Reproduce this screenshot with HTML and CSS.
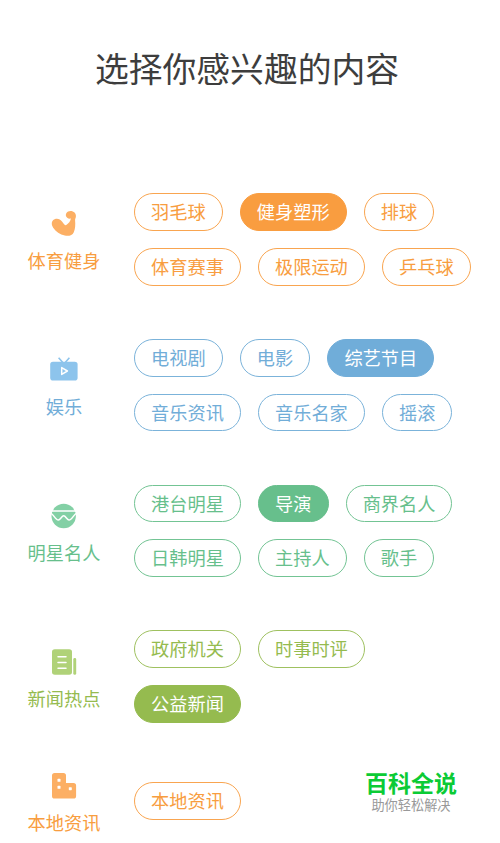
FILE: index.html
```html
<!DOCTYPE html>
<html lang="zh-CN">
<head>
  <meta charset="UTF-8" />
  <title>选择你感兴趣的内容</title>
  <link rel="stylesheet" href="styles.css">
</head>
<body>
  <h1>选择你感兴趣的内容</h1>

  <div class="sections">
    <div class="section orange">
      <div class="category">
        <svg class="icon" viewBox="0 0 28 28">
          <path d="M17.2 7.8C15.8 6.6 15.4 4.8 16.3 3.2C17.5 1.1 20.5 .5 22.8 1.5C25 2.3 26.2 4.5 25.9 6.7C25.7 8 25 8.6 25.1 10.5C25.5 14.5 25.3 19 23.8 22.2C22.4 25.4 18.8 26.4 14.8 25.6C10 24.6 5.8 21.6 3.2 17.8C1.5 15.3 1.2 12.6 2.8 10.6C4.4 8.6 7.4 8.2 9.7 9.4C11.6 10.4 13 12.6 14.4 14.6C15 15.4 15.8 15.4 16.6 14.8C18.6 13.4 20.4 11.6 20.9 8.6C19.4 9 18.2 8.6 17.2 7.8Z"/>
        </svg>
        <p>体育健身</p>
      </div>
      <div class="tags">
        <span class="tag">羽毛球</span>
        <span class="tag active">健身塑形</span>
        <span class="tag">排球</span>
        <span class="tag">体育赛事</span>
        <span class="tag">极限运动</span>
        <span class="tag">乒乓球</span>
      </div>
    </div>

    <div class="section blue">
      <div class="category">
        <svg class="icon" viewBox="0 0 28 28">
          <path class="stroke" d="M8.6 1.8L12.6 6.3M19.4 1.8L15.4 6.3"/>
          <rect x="0.2" y="5.8" width="27.4" height="18.8" rx="2.8"/>
          <path class="cut" d="M11.7 11.6V18.4L17.4 15Z"/>
        </svg>
        <p>娱乐</p>
      </div>
      <div class="tags">
        <span class="tag">电视剧</span>
        <span class="tag">电影</span>
        <span class="tag active">综艺节目</span>
        <span class="tag">音乐资讯</span>
        <span class="tag">音乐名家</span>
        <span class="tag">摇滚</span>
      </div>
    </div>

    <div class="section green">
      <div class="category">
        <svg class="icon" viewBox="0 0 28 28">
          <circle cx="13.7" cy="14" r="12.2"/>
          <path class="cut" d="M0 9H28M1.4 11.6C3.4 12.4 5.6 18 8.4 18C10.2 18 11.8 13.8 13.7 13.8C15.6 13.8 17.2 18 19 18C21.8 18 24 12.4 26 11.6"/>
        </svg>
        <p>明星名人</p>
      </div>
      <div class="tags">
        <span class="tag">港台明星</span>
        <span class="tag active">导演</span>
        <span class="tag">商界名人</span>
        <span class="tag">日韩明星</span>
        <span class="tag">主持人</span>
        <span class="tag">歌手</span>
      </div>
    </div>

    <div class="section lime">
      <div class="category">
        <svg class="icon" viewBox="0 0 28 28">
          <rect x="2" y="1.3" width="20" height="25.5" rx="2.8"/>
          <rect x="23.3" y="10" width="2.9" height="16.8" rx="1.4"/>
          <path class="cut" d="M8 8.7H16M8 14.5H16M8 20.2H16"/>
        </svg>
        <p>新闻热点</p>
      </div>
      <div class="tags">
        <span class="tag">政府机关</span>
        <span class="tag">时事时评</span>
        <span class="tag active">公益新闻</span>
      </div>
    </div>

    <div class="section orange">
      <div class="category">
        <svg class="icon" viewBox="0 0 28 28">
          <path d="M4.6 1H13.4Q16 1 16 3.6V11H23.5Q26.1 11 26.1 13.6V23.9Q26.1 26.5 23.5 26.5H4.6Q2 26.5 2 23.9V3.6Q2 1 4.6 1Z"/>
          <rect class="window" x="7.5" y="6.8" width="3" height="3" rx=".6"/>
          <rect class="window" x="7.5" y="13.8" width="3" height="3" rx=".6"/>
          <rect class="window" x="18.8" y="15.2" width="3" height="3" rx=".6"/>
        </svg>
        <p>本地资讯</p>
      </div>
      <div class="tags">
        <span class="tag">本地资讯</span>
      </div>
    </div>
  </div>

  <div class="watermark">
    <strong>百科全说</strong>
    <span>助你轻松解决</span>
  </div>
</body>
</html>
```
FILE: styles.css
```css
* {
  margin: 0;
  padding: 0;
  box-sizing: border-box;
}

body {
  position: relative;
  height: 843px;
  overflow: hidden;
  background: #fff;
  font-family: "Noto Sans CJK SC", sans-serif;
}

h1 {
  padding: 43px 6px 0 0;
  height: 193.3px;
  text-align: center;
  font-size: 33.8px;
  font-weight: 400;
  line-height: 50px;
  color: #3d3d3d;
}

.section {
  display: flex;
  align-items: center;
  margin-bottom: 53.3px;
}

.section:last-child {
  margin-top: -4px;
}

.category {
  width: 128px;
  height: 58px;
  margin-right: 6px;
  display: flex;
  flex-direction: column;
  align-items: center;
  flex-shrink: 0;
}

.category p {
  margin-top: 9px;
  font-size: 18.2px;
  line-height: 26px;
  color: var(--main);
}

.icon {
  width: 28px;
  height: 28px;
  flex-shrink: 0;
  fill: var(--icon);
}

.icon .stroke {
  fill: none;
  stroke: var(--icon);
  stroke-width: 1.6;
}

.icon .cut {
  fill: none;
  stroke: #fff;
  stroke-width: 1.5;
  stroke-linejoin: round;
  stroke-linecap: round;
}

.icon .window {
  fill: #fff;
}

.tags {
  display: flex;
  flex-wrap: wrap;
  gap: 17px;
  width: 350px;
}

.tag {
  height: 37.7px;
  padding: 0 16.1px;
  border: 1px solid var(--border);
  border-radius: 19px;
  font-size: 18.2px;
  line-height: 35px;
  white-space: nowrap;
  color: var(--main);
}

.tag.active {
  background: var(--fill);
  border-color: var(--fill);
  color: #fff;
}

.orange {
  --main: #f89d40;
  --border: #f9a550;
  --fill: #f99d40;
  --icon: #fcaf64;
}

.blue {
  --main: #71add8;
  --border: #7bb3da;
  --fill: #70add9;
  --icon: #8dc4ec;
}

.green {
  --main: #67bf8c;
  --border: #73c494;
  --fill: #67bf8c;
  --icon: #83d0a5;
}

.lime {
  --main: #95bb4f;
  --border: #9fc160;
  --fill: #95bb4f;
  --icon: #b0d278;
}

/* site mark in the corner, over the page */
.watermark {
  position: absolute;
  right: 43px;
  top: 766px;
  display: flex;
  flex-direction: column;
  align-items: center;
}

.watermark strong {
  font-size: 23px;
  font-weight: 700;
  line-height: 32px;
  color: #0bcb35;
}

.watermark span {
  font-size: 13.2px;
  line-height: 13px;
  color: #999;
}
```
